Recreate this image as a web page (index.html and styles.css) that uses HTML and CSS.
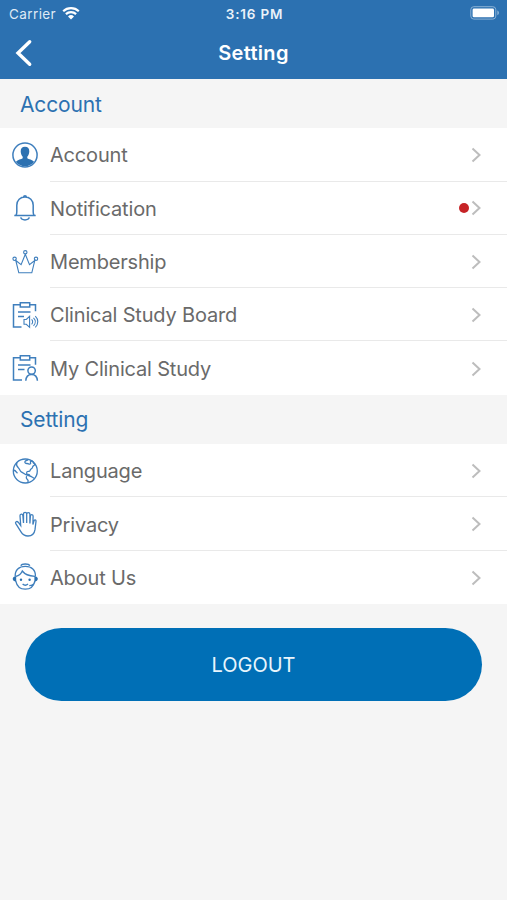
FILE: index.html
```html
<!DOCTYPE html>
<html lang="en">

<head>
    <meta charset="UTF-8">
    <meta name="viewport" content="width=device-width, initial-scale=1.0">
    <title>Setting</title>
    <link rel="stylesheet" href="styles.css">
</head>

<body>
    <header class="header">
        <div class="status-bar">
            <div class="carrier">
                <span>Carrier</span>
                <svg class="wifi" viewBox="0 0 18 14">
                    <path d="M1.2 5.2a11.2 11.2 0 0 1 15.6 0M3.9 8.1a7.4 7.4 0 0 1 10.2 0" />
                    <path class="solid" d="M9 13.4 6 10.4a4.3 4.3 0 0 1 6 0z" />
                </svg>
            </div>
            <span class="time">3:16 PM</span>
            <svg class="battery" viewBox="0 0 30 14">
                <rect class="case" x=".8" y=".7" width="25" height="12.4" rx="3" />
                <rect class="level" x="2.6" y="2.5" width="21.4" height="8.8" rx="1.4" />
                <path class="tip" d="M27.3 4.6v4.6c2.2-.6 2.2-4 0-4.6z" />
            </svg>
        </div>
        <div class="nav">
            <svg class="back" viewBox="0 0 18 28"><path d="M14.7 2.8 3 14l11.7 11.2" /></svg>
            <h1>Setting</h1>
        </div>
    </header>

    <main>
        <h2>Account</h2>
        <ul class="menu">
            <li>
                <svg class="icon" viewBox="0 0 28 28">
                    <circle cx="14" cy="14" r="12.1" />
                    <path class="solid" d="M14 5.8c3 0 4.4 2 4.300 4.800-.1 2.300-.9 4-2 5.100v1.600c1.300 1 5 1.400 6.800 3.400a11.500 11.500 0 0 1-18.200 0c1.800-2 5.500-2.400 6.800-3.400v-1.600c-1.100-1.100-1.900-2.800-2-5.100C9.600 7.800 11 5.800 14 5.800z" />
                </svg>
                <div class="row"><span>Account</span><svg class="arrow" viewBox="0 0 10 16"><path d="m1.500 1.500 7 6.500-7 6.500" /></svg></div>
            </li>
            <li>
                <svg class="icon" viewBox="0 0 28 28">
                    <path d="M3.300 21.600h21.400M5 21.300c.7-1 .8-2 .8-3.500v-6.500c0-5 3.500-8.300 8.200-8.300s8.200 3.300 8.200 8.300v6.500c0 1.500.1 2.500.8 3.500M12.700 2.800c0-1.300 2.600-1.300 2.600 0M9.700 23.400c.8 3.300 7.800 3.300 8.600 0" />
                </svg>
                <div class="row"><span>Notification</span><i class="dot"></i><svg class="arrow" viewBox="0 0 10 16"><path d="m1.500 1.500 7 6.500-7 6.500" /></svg></div>
            </li>
            <li>
                <svg class="icon thin" viewBox="0 0 28 28">
                    <circle cx="14.300" cy="4.300" r="1.700" />
                    <circle cx="3.600" cy="10.800" r="1.700" />
                    <circle cx="25" cy="10.800" r="1.700" />
                    <path d="m4.800 12.500 3 12.300h13l3-12.300-5.300 4.200-4.200-10.500-4.200 10.500z" />
                </svg>
                <div class="row"><span>Membership</span><svg class="arrow" viewBox="0 0 10 16"><path d="m1.500 1.500 7 6.500-7 6.500" /></svg></div>
            </li>
            <li>
                <svg class="icon" viewBox="0 0 28 28">
                    <path d="M9.300 3.800H2.500v22.300h8M18.700 3.800h5.800v6.400M9.300 1.800h9.400v4.300H9.300zM7 11h12.500M7 15.400h6" />
                    <path class="thin" d="M13 18.500h2.300l3.300-3.200v11l-3.300-3H13zM20.600 18.300c1.400 1.300 1.400 3.600 0 5M22.500 16.800c2.300 2.300 2.300 5.700 0 8M24.300 15.200c3.300 3.200 3.300 8 0 11.200" />
                </svg>
                <div class="row"><span>Clinical Study Board</span><svg class="arrow" viewBox="0 0 10 16"><path d="m1.500 1.500 7 6.500-7 6.500" /></svg></div>
            </li>
            <li>
                <svg class="icon" viewBox="0 0 28 28">
                    <path d="M9.300 3.800H2.500v22.300h8.500M18.700 3.800h5.800v7M9.300 1.800h9.400v4.300H9.300zM7 11h12.500M7 15.400h6.500" />
                    <circle cx="20.600" cy="16.600" r="3.700" />
                    <path d="M14.800 26.700c.2-4 2.300-6.300 5.800-6.300s5.600 2.300 5.800 6.300" />
                </svg>
                <div class="row"><span>My Clinical Study</span><svg class="arrow" viewBox="0 0 10 16"><path d="m1.500 1.500 7 6.500-7 6.500" /></svg></div>
            </li>
        </ul>

        <h2>Setting</h2>
        <ul class="menu">
            <li>
                <svg class="icon globe" viewBox="0 0 28 28">
                    <circle cx="14.300" cy="14" r="12" />
                    <path d="M6 5.200c-1 2 0 4.300 1.300 5.600 1.500 1.300 1.400 3 3 4.100l4.700 2.800 3.500 1.300c.4-1-.3-1.600-1.700-1.500-1.400 0-1.600-2.500-.3-3 1-.3 2.300.2 2.500-.9.300-1.600 1-1.600 2-2.400.8-.7.300-1.700 1.300-2.300 1-.5 1.700-.8 1.400-1.900-.3-1-1.600-.4-1.500-1.800 0-1-1.500-1.500-2.500-.8-.9.600.5 1.600-.3 2.500-1 1-2-.5-3.400-.4-1.600 0-2.700-1-1.900-2.200.7-1 2.400-.2 2.700-2M15.800 19.200c-1 1.300-.4 2.600.8 3.400 1 .7.600 1.800.2 3M18.500 19c2 .1 2.500 1.600 4.800 2.400M2.500 13c2.300.5 2.800 2 4 3.300" />
                </svg>
                <div class="row"><span>Language</span><svg class="arrow" viewBox="0 0 10 16"><path d="m1.500 1.500 7 6.500-7 6.500" /></svg></div>
            </li>
            <li>
                <svg class="icon hand" viewBox="0 0 28 28">
                    <path d="M9.700 15.500 9 5.800c-.1-2.200 2.600-2.400 2.900-.2l.6 7.400V4c0-2.200 3.200-2.200 3.200 0v9V4.300c0-2.200 3.200-2.200 3.200 0v9.200l.5-7.500c.2-2 2.800-1.700 2.700.3l-.2 8.200 1-3.500c.5-1.700 2.400-1.200 2.100.5l-1 8.200c-.6 4.100-3.300 6.300-7 6.300-3.400 0-5.400-1.400-7-4.100l-5.200-8.200c-1-1.700 1-3 2.400-1.500z" />
                </svg>
                <div class="row"><span>Privacy</span><svg class="arrow" viewBox="0 0 10 16"><path d="m1.500 1.500 7 6.500-7 6.500" /></svg></div>
            </li>
            <li>
                <svg class="icon hand" viewBox="0 0 28 28">
                    <path d="M9.800 2.800C10.800.4 17.800.4 18.800 2.800M4.200 13.500C3.800 7 8 3.300 14.300 3.300s10.500 3.700 10.100 10.200M4.800 13.300c3.500-.7 5.500-2.700 6.500-5.300 2.400 3.300 6.500 5 12.500 5.300M4.700 17.800c1.200 5.500 4.900 8.400 9.600 8.400s8.400-2.900 9.600-8.400M11.600 21c1.600 1.500 3.800 1.500 5.400 0M24 18.300c-.7 2.700-3 4.200-5.700 4.300" />
                    <path class="solid" d="M5.200 13.300v5.200c-4.600 0-4.600-5.200 0-5.200zM23.400 13.300v5.200c4.600 0 4.600-5.200 0-5.200z" />
                    <circle class="solid" cx="10" cy="16.700" r="1.200" />
                    <circle class="solid" cx="18.600" cy="16.700" r="1.200" />
                </svg>
                <div class="row"><span>About Us</span><svg class="arrow" viewBox="0 0 10 16"><path d="m1.500 1.500 7 6.500-7 6.500" /></svg></div>
            </li>
        </ul>

        <button class="logout">LOGOUT</button>
    </main>
</body>

</html>
```
FILE: styles.css
```css
* {
    box-sizing: border-box;
}
body {
    font-family: Inter, "Liberation Sans", sans-serif;
    margin: 0;
    background-color: #f5f5f5;
}
svg {
    display: block;
    fill: none;
    overflow: visible;
}
.header {
    height: 79px;
    background-color: #2c71b1;
    color: #fff;
}
.status-bar {
    display: grid;
    grid-template-columns: 1fr auto 1fr;
    align-items: center;
    height: 27px;
    padding: 0 7px 0 9px;
    font-size: 13.5px;
}
.carrier {
    display: flex;
    align-items: center;
    gap: 6px;
    color: #dfeaf5;
    letter-spacing: 0.4px;
}
.wifi {
    width: 18px;
    height: 14px;
    margin-top: -2px;
    stroke: #fff;
    stroke-width: 2.2;
}
.wifi .solid {
    fill: #fff;
    stroke: none;
}
.time {
    font-weight: 600;
    color: #eaf2f9;
    letter-spacing: 0.8px;
}
.battery {
    justify-self: end;
    width: 30px;
    height: 14px;
    margin-top: -1px;
}
.battery .case {
    stroke: #8bb2d6;
    stroke-width: 1;
}
.battery .level {
    fill: #fff;
}
.battery .tip {
    fill: #8bb2d6;
}
.nav {
    display: grid;
    grid-template-columns: 1fr auto 1fr;
    align-items: center;
    height: 51px;
    padding: 0 15px;
}
.back {
    width: 18px;
    height: 28px;
    stroke: #fff;
    stroke-width: 3.4;
    stroke-linecap: round;
}
h1 {
    margin: 0;
    font-size: 20px;
    font-weight: 600;
    letter-spacing: 0.3px;
}
h2 {
    display: flex;
    align-items: center;
    height: 49.3px;
    margin: 0;
    padding: 1px 0 0 20px;
    color: #2c71b1;
    font-size: 21px;
    font-weight: 400;
    letter-spacing: -0.15px;
}
.menu {
    margin: 0;
    padding: 0;
    list-style: none;
    background-color: #fff;
}
.menu li {
    display: flex;
    align-items: center;
    height: 53.3px;
    padding-left: 11px;
}
.icon {
    width: 28px;
    height: 28px;
    margin-right: 11px;
    stroke: #3f7fbd;
    stroke-width: 1.5;
}
.icon.globe,
.icon.hand {
    stroke-width: 1.3;
}
.icon.thin,
.icon .thin {
    stroke-width: 1.1;
}
.icon .solid {
    fill: #2c71b1;
    stroke: none;
}
.row {
    display: flex;
    flex: 1;
    align-items: center;
    height: 100%;
    padding-right: 26px;
    border-bottom: 1px solid #e9e9e9;
    color: #6a6a6a;
    font-size: 20px;
    letter-spacing: -0.18px;
}
.menu li:last-child .row {
    border-bottom: none;
}
.row span {
    flex: 1;
    padding-top: 2px;
}
.dot {
    width: 10px;
    height: 10px;
    margin-right: 2px;
    border-radius: 50%;
    background-color: #c62326;
}
.arrow {
    width: 10px;
    height: 16px;
    margin-top: 1px;
    stroke: #bdbdbd;
    stroke-width: 2;
}
.logout {
    display: block;
    width: calc(100% - 50px);
    height: 73px;
    margin: 24px auto 0;
    padding-top: 3px;
    border: none;
    border-radius: 37px;
    background-color: #006fb6;
    color: #e9f5fc;
    font-family: inherit;
    font-size: 20px;
    cursor: pointer;
}
```
